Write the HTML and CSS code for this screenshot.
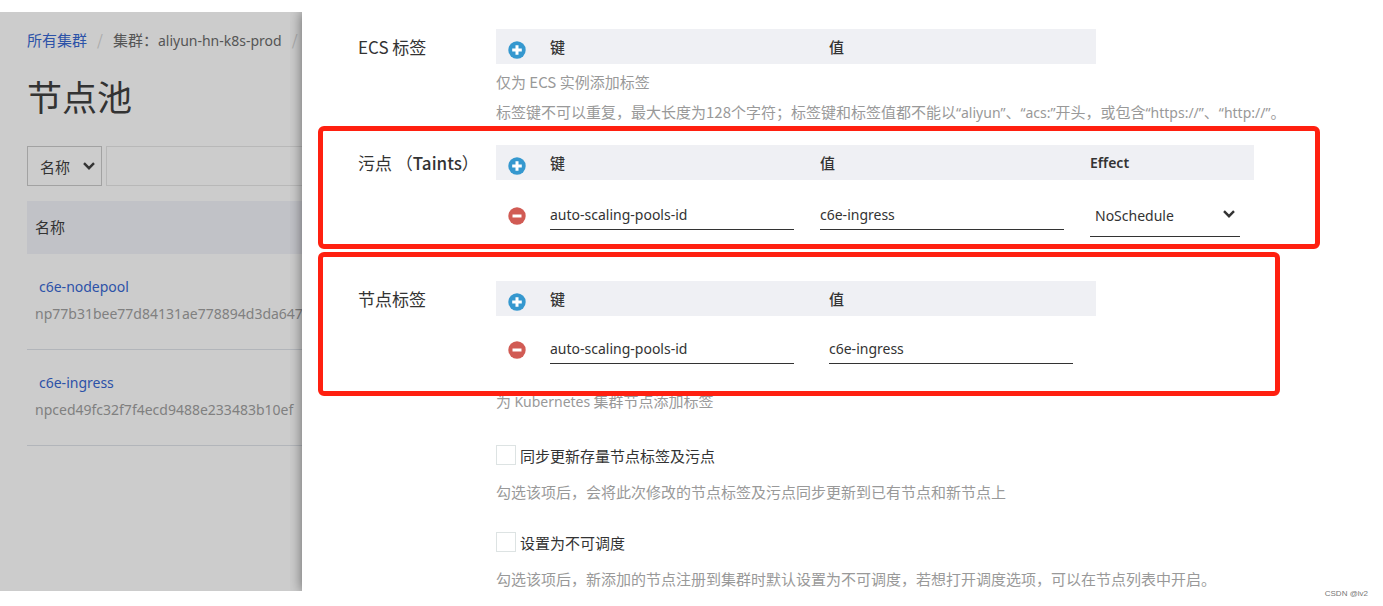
FILE: index.html
```html
<!DOCTYPE html>
<html lang="zh-CN">
<head>
    <meta charset="UTF-8">
    <meta name="viewport" content="width=device-width, initial-scale=1.0">
    <title>节点池</title>
    <link rel="stylesheet" href="styles.css">
</head>
<body>
    <svg class="symbols" aria-hidden="true">
        <symbol id="icon-add" viewBox="0 0 18 18">
            <circle cx="9" cy="9" r="8.7" fill="#3598cf"/>
            <path d="M7.5 4.2h3v3.3h3.3v3h-3.3v3.3h-3v-3.3H4.200v-3h3.300z" fill="#fff"/>
        </symbol>
        <symbol id="icon-remove" viewBox="0 0 18 18">
            <circle cx="9" cy="9" r="8.7" fill="#d15b54"/>
            <path d="M4.500 7.500h9v3h-9z" fill="#fff"/>
        </symbol>
        <symbol id="icon-arrow" viewBox="0 0 12 8">
            <path d="M1 1.200l5 5 5-5" fill="none" stroke="currentColor" stroke-width="2.400"/>
        </symbol>
    </svg>

    <div class="screen">
        <main class="list-page">
            <nav class="breadcrumb">
                <a href="#">所有集群</a>
                <span class="slash">/</span>
                <span>集群：<span class="latin">aliyun-hn-k8s-prod</span></span>
                <span class="slash">/</span>
            </nav>
            <h1>节点池</h1>
            <div class="search">
                <div class="select-box search-type">
                    <select aria-label="搜索类型">
                        <option>名称</option>
                    </select>
                    <svg class="arrow"><use href="#icon-arrow"/></svg>
                </div>
                <input type="text" class="search-input" aria-label="搜索">
            </div>
            <table class="pool-table">
                <thead>
                    <tr><th>名称</th></tr>
                </thead>
                <tbody>
                    <tr>
                        <td>
                            <a href="#">c6e-nodepool</a>
                            <div class="pool-id">np77b31bee77d84131ae778894d3da647</div>
                        </td>
                    </tr>
                    <tr>
                        <td>
                            <a href="#">c6e-ingress</a>
                            <div class="pool-id">npced49fc32f7f4ecd9488e233483b10ef</div>
                        </td>
                    </tr>
                </tbody>
            </table>
        </main>

        <section class="drawer">
            <div class="form-row">
                <div class="form-label">ECS 标签</div>
                <div class="form-control">
                    <table class="tags">
                        <thead>
                            <tr>
                                <th class="action"><button type="button" aria-label="添加"><svg><use href="#icon-add"/></svg></button></th>
                                <th class="key">键</th>
                                <th>值</th>
                            </tr>
                        </thead>
                    </table>
                    <div class="notes">
                        <p class="help">仅为 ECS 实例添加标签</p>
                        <p class="help">标签键不可以重复，最大长度为128个字符；标签键和标签值都不能以<span class="latin">“aliyun”</span>、<span class="latin">“acs:”</span>开头，或包含<span class="latin">“https://”</span>、<span class="latin">“http://”</span>。</p>
                    </div>
                </div>
            </div>

            <div class="form-row marked taints-row">
                <div class="form-label">污点 （<span class="latin-bold">Taints</span>）</div>
                <div class="form-control">
                    <table class="tags taints">
                        <thead>
                            <tr>
                                <th class="action"><button type="button" aria-label="添加"><svg><use href="#icon-add"/></svg></button></th>
                                <th class="key">键</th>
                                <th class="value">值</th>
                                <th class="latin">Effect</th>
                            </tr>
                        </thead>
                        <tbody>
                            <tr>
                                <td class="action"><button type="button" aria-label="删除"><svg><use href="#icon-remove"/></svg></button></td>
                                <td><input type="text" value="auto-scaling-pools-id" aria-label="键"></td>
                                <td><input type="text" value="c6e-ingress" aria-label="值"></td>
                                <td>
                                    <div class="select-box effect">
                                        <select aria-label="Effect">
                                            <option>NoSchedule</option>
                                        </select>
                                        <svg class="arrow"><use href="#icon-arrow"/></svg>
                                    </div>
                                </td>
                            </tr>
                        </tbody>
                    </table>
                </div>
            </div>

            <div class="form-row marked labels-row">
                <div class="form-label">节点标签</div>
                <div class="form-control">
                    <table class="tags">
                        <thead>
                            <tr>
                                <th class="action"><button type="button" aria-label="添加"><svg><use href="#icon-add"/></svg></button></th>
                                <th class="key">键</th>
                                <th>值</th>
                            </tr>
                        </thead>
                        <tbody>
                            <tr>
                                <td class="action"><button type="button" aria-label="删除"><svg><use href="#icon-remove"/></svg></button></td>
                                <td><input type="text" value="auto-scaling-pools-id" aria-label="键"></td>
                                <td><input type="text" value="c6e-ingress" aria-label="值"></td>
                            </tr>
                        </tbody>
                    </table>
                </div>
            </div>

            <div class="form-extra">
                <p class="help">为 <span class="latin">Kubernetes</span> 集群节点添加标签</p>
                <div class="option">
                    <label><input type="checkbox">同步更新存量节点标签及污点</label>
                    <p class="help">勾选该项后，会将此次修改的节点标签及污点同步更新到已有节点和新节点上</p>
                </div>
                <div class="option">
                    <label><input type="checkbox">设置为不可调度</label>
                    <p class="help">勾选该项后，新添加的节点注册到集群时默认设置为不可调度，若想打开调度选项，可以在节点列表中开启。</p>
                </div>
            </div>
        </section>
    </div>
    <footer class="watermark">CSDN @lv2</footer>
</body>
</html>
```
FILE: styles.css
```css
* {
    box-sizing: border-box;
}
body {
    margin: 0;
    padding-top: 12px;
    min-height: 100vh;
    display: flex;
    flex-direction: column;
    background: #fff;
    color: #333;
    font-family: "Noto Sans CJK SC", sans-serif;
    font-size: 15px;
}
a {
    color: #2c52a8;
    text-decoration: none;
}
p {
    margin: 0;
}
button, input, select {
    font: inherit;
    color: inherit;
}
.symbols {
    position: absolute;
    width: 0;
    height: 0;
}
.latin {
    font-family: "Noto Sans", "Noto Sans CJK SC", sans-serif;
    font-size: 14px;
}
.latin-bold {
    font-weight: 500;
}
.screen {
    flex: 1;
    display: grid;
    grid-template-columns: 302px 1fr;
}

/* page under the drawer */
.list-page {
    min-width: 0;
    overflow: hidden;
    padding: 13px 0 0 27px;
    background: #ccc;
    white-space: nowrap;
}
.breadcrumb {
    display: flex;
    gap: 10px;
    line-height: 30px;
    color: #555;
}
.slash {
    color: #aaa;
}
h1 {
    margin: 12px 0 22px;
    font-size: 35px;
    font-weight: 400;
    line-height: 56px;
}
.search {
    display: flex;
    gap: 4px;
    height: 40px;
    margin-bottom: 15px;
}
.search-type {
    width: 75px;
    border: 1px solid #a2a2a2;
}
.search-type select {
    padding-left: 12px;
}
.search-type .arrow {
    right: 6px;
}
.search-input {
    flex: 1;
    min-width: 0;
    border: 1px solid #b8b8b8;
    border-right: 0;
    background: transparent;
}
.select-box {
    position: relative;
}
.select-box select {
    width: 100%;
    height: 100%;
    border: 0;
    background: transparent;
    appearance: none;
}
.arrow {
    position: absolute;
    top: 15px;
    width: 12px;
    height: 8px;
    pointer-events: none;
}
.pool-table {
    width: 100%;
    border-collapse: collapse;
    line-height: 27px;
}
.pool-table th {
    height: 53px;
    padding: 0 8px 3px;
    background: #c1c2c7;
    font-weight: 400;
    text-align: left;
}
.pool-table td {
    padding: 19px 8px 22px;
    border-bottom: 1px solid #b2b5ba;
    font-family: "Noto Sans", sans-serif;
    font-size: 14px;
}
.pool-table a {
    padding-left: 4px;
}
.pool-id {
    color: #808080;
}

/* edit drawer */
.drawer {
    padding: 17px 60px 0 56px;
    background: #fff;
    box-shadow: 0 0 12px rgba(0, 0, 0, 0.5);
    clip-path: inset(0 0 0 -12px);
}
.form-row {
    display: grid;
    grid-template-columns: 138px 1fr;
}
.form-label {
    font-size: 17px;
    line-height: 35px;
    white-space: nowrap;
}
.notes {
    padding-top: 3px;
}
.help {
    color: #999;
    line-height: 30px;
    white-space: nowrap;
}
.tags {
    width: 600px;
    table-layout: fixed;
    border-collapse: collapse;
}
.tags.taints {
    width: 758px;
}
.tags th {
    height: 35px;
    padding: 0;
    background: #eff0f4;
    font-weight: 500;
    text-align: left;
}
.tags th.latin {
    font-weight: 600;
}
.tags td {
    padding: 18px 0 0;
    vertical-align: top;
}
.tags .action {
    width: 54px;
    padding-left: 12px;
}
.tags th.action {
    padding-top: 6px;
}
.tags .key {
    width: 279px;
}
.taints .key, .taints .value {
    width: 270px;
}
.tags td.action {
    padding-top: 25px;
}
.tags button {
    display: block;
    padding: 0;
    border: 0;
    background: none;
    cursor: pointer;
}
.tags svg {
    display: block;
}
.tags button svg {
    width: 18px;
    height: 18px;
}
.tags input {
    display: block;
    width: 244px;
    height: 30px;
    padding: 0;
    border: 0;
    border-bottom: 1px solid #333;
    background: none;
    font-family: "Noto Sans", sans-serif;
    font-size: 14px;
}
.tags.taints td {
    padding-top: 20px;
}
.tags.taints td.action {
    padding-top: 27px;
}
.tags.taints td:last-child {
    padding-top: 14px;
}
.effect {
    width: 150px;
    height: 43px;
    border-bottom: 1px solid #333;
    font-family: "Noto Sans", sans-serif;
    font-size: 14px;
}
.effect select {
    padding-left: 5px;
}
.effect .arrow {
    right: 5px;
    top: 16px;
}

/* highlighted settings */
.marked {
    position: relative;
}
.marked::after {
    content: "";
    position: absolute;
    border: 5px solid #ff2010;
    border-radius: 6px;
    pointer-events: none;
}
.taints-row {
    margin-top: 17px;
    min-height: 136px;
}
.taints-row::after {
    inset: -19px 3px 32px -40px;
}
.labels-row {
    min-height: 105px;
}
.labels-row::after {
    inset: -29px 43px -10px -40px;
}
.form-extra {
    padding-left: 138px;
}
.form-extra .option {
    padding-top: 23px;
}
.option .help {
    line-height: 24px;
}
.option label {
    display: flex;
    align-items: center;
    gap: 4px;
    height: 30px;
    margin-bottom: 10px;
}
.option input {
    width: 20px;
    height: 20px;
    margin: 0;
    border: 1px solid #dde3e3;
    appearance: none;
}
.watermark {
    height: 15px;
    padding-right: 15px;
    color: #777;
    font: 8px/6px "Liberation Sans", sans-serif;
    text-align: right;
}
```
